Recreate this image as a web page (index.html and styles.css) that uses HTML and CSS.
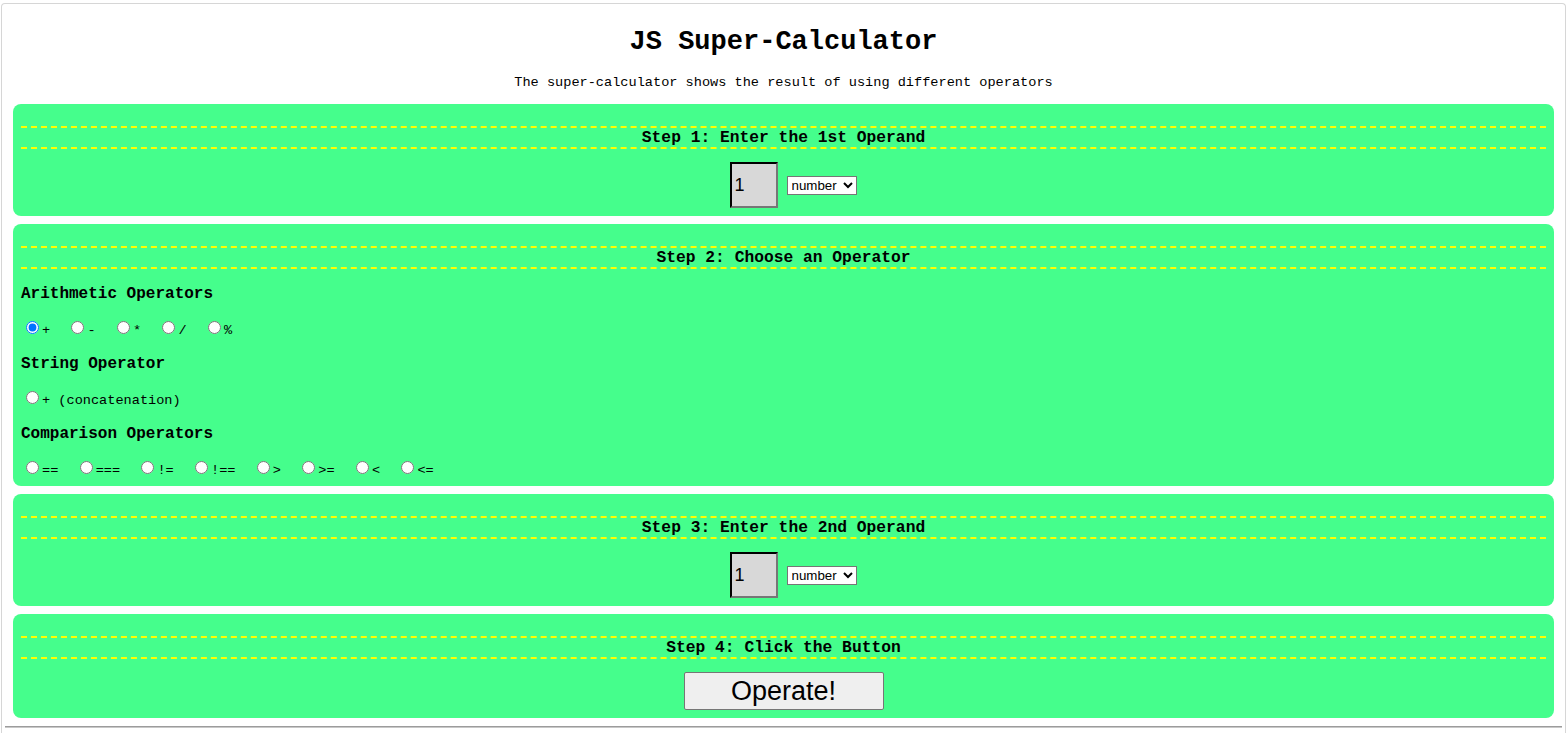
FILE: index.html
```html
<!DOCTYPE html>
<html lang="en">
<head>
<meta charset="utf-8">
<title>JS Super-Calculator</title>
<link rel="stylesheet" href="styles.css">
</head>
<body>
<div class="frame">
  <h1 class="title">JS Super-Calculator</h1>
  <p class="subtitle">The super-calculator shows the result of using different operators</p>

  <section class="card">
    <h2 class="step">Step 1: Enter the 1st Operand</h2>
    <div class="controls">
      <input class="operand" type="text" value="1">
      <select class="type-select"><option>number</option><option>string</option><option>boolean</option></select>
    </div>
  </section>

  <section class="card card-ops">
    <h2 class="step">Step 2: Choose an Operator</h2>
    <h3 class="group">Arithmetic Operators</h3>
    <div class="radios"><label class="opt"><input type="radio" name="op" checked>+</label><label class="opt"><input type="radio" name="op">-</label><label class="opt"><input type="radio" name="op">*</label><label class="opt"><input type="radio" name="op">/</label><label class="opt"><input type="radio" name="op">%</label></div>
    <h3 class="group">String Operator</h3>
    <div class="radios"><label class="opt"><input type="radio" name="op">+ (concatenation)</label></div>
    <h3 class="group">Comparison Operators</h3>
    <div class="radios"><label class="opt"><input type="radio" name="op">==</label><label class="opt"><input type="radio" name="op">===</label><label class="opt"><input type="radio" name="op">!=</label><label class="opt"><input type="radio" name="op">!==</label><label class="opt"><input type="radio" name="op">&gt;</label><label class="opt"><input type="radio" name="op">&gt;=</label><label class="opt"><input type="radio" name="op">&lt;</label><label class="opt"><input type="radio" name="op">&lt;=</label></div>
  </section>

  <section class="card">
    <h2 class="step">Step 3: Enter the 2nd Operand</h2>
    <div class="controls">
      <input class="operand" type="text" value="1">
      <select class="type-select"><option>number</option><option>string</option><option>boolean</option></select>
    </div>
  </section>

  <section class="card">
    <h2 class="step">Step 4: Click the Button</h2>
    <div class="action">
      <button class="operate" type="button">Operate!</button>
    </div>
  </section>

  <hr class="rule">
</div>
</body>
</html>
```

FILE: styles.css
```css
html, body {
  margin: 0;
  padding: 0;
  background: #ffffff;
}

body {
  font-family: "Liberation Mono", "Courier New", monospace;
  color: #000000;
  height: 733px;
  overflow: hidden;
}

.frame {
  margin: 3px 1px 0 1px;
  padding: 3px 3px 0 3px;
  border: 1px solid #d6d6d6;
  border-bottom: none;
  border-radius: 4px 4px 0 0;
  min-height: 760px;
  box-sizing: border-box;
}

.title {
  margin: 20px 0 17px;
  font-size: 27px;
  line-height: 31px;
  font-weight: bold;
  text-align: center;
}

.subtitle {
  margin: 0 0 13px;
  font-size: 13.6px;
  line-height: 16px;
  text-align: center;
}

.card {
  margin: 0 8px 8px;
  padding: 22px 8px 8px;
  background: #45fe8c;
  border-radius: 8px;
}

.card-ops {
  padding-bottom: 2px;
}

.step {
  margin: 0;
  border-top: 2px dashed #ffff00;
  border-bottom: 2px dashed #ffff00;
  font-size: 16.3px;
  line-height: 19px;
  font-weight: bold;
  text-align: center;
}

.controls {
  margin-top: 13px;
  display: flex;
  justify-content: center;
  align-items: center;
  gap: 9px;
  padding-left: 19px;
}

.operand {
  width: 48px;
  height: 46px;
  box-sizing: border-box;
  padding: 1px 3px;
  border: 2px inset #767676;
  border-top-color: #2e2e2e;
  border-left-color: #2e2e2e;
  background: #d8d8d8;
  font-family: "Liberation Sans", Arial, sans-serif;
  font-size: 18px;
  color: #000;
}

.type-select {
  height: 19px;
  font-family: "Liberation Sans", Arial, sans-serif;
  font-size: 13.33px;
  background: #ffffff;
  border: 1px solid #767676;
  border-radius: 0;
  padding: 0;
  color: #000;
}

.group {
  margin: 14px 0 14px;
  font-size: 16px;
  line-height: 20px;
  font-weight: bold;
}

.step + .group {
  margin-top: 15px;
}

.radios + .group {
  margin-top: 10px;
}

.radios {
  font-size: 13.6px;
  line-height: 26px;
  white-space: nowrap;
}

.opt {
  margin-right: 16.3px;
}

.opt input {
  margin: 3px 3px 0 5px;
  width: 13px;
  height: 13px;
}

.action {
  margin-top: 13px;
  display: flex;
  justify-content: center;
}

.operate {
  width: 200px;
  height: 38px;
  padding: 0;
  font-family: "Liberation Sans", Arial, sans-serif;
  font-size: 27px;
  color: #000;
  background: #efefef;
  border: 1px solid #767676;
  border-radius: 2px;
}

.rule {
  margin: 0;
  height: 0;
  border: none;
  border-top: 1px solid #9c9c9c;
  border-bottom: 1px solid #c8c8c8;
}
```
